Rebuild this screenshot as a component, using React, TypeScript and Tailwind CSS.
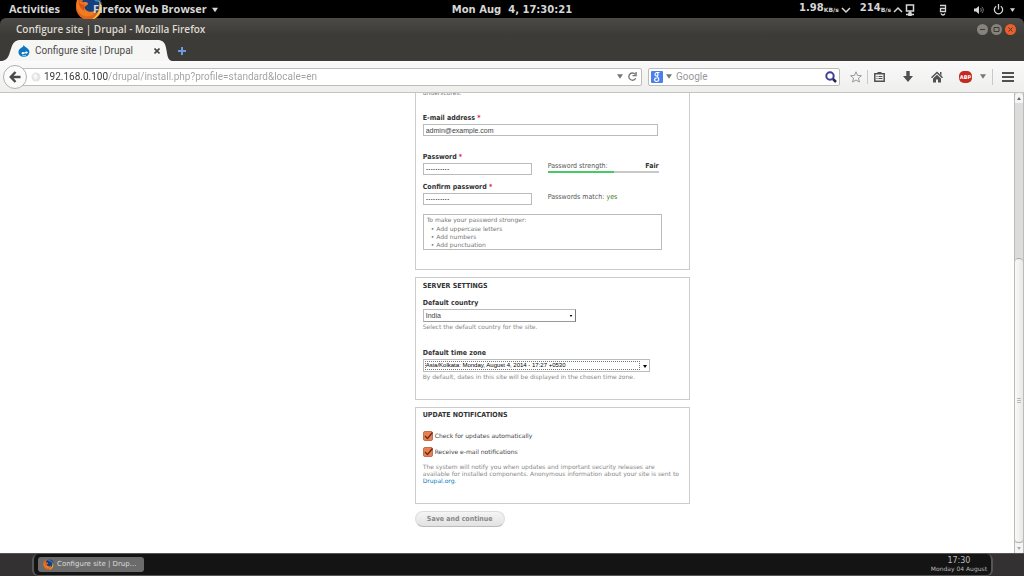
import React, { useState } from "react";

const FirefoxIcon: React.FC<{ className?: string }> = ({ className }) => (
  <svg viewBox="0 0 30 30" className={className} aria-hidden="true">
    <circle cx="15" cy="15" r="14" fill="#e2631c" />
    <circle cx="18" cy="12" r="10.5" fill="#173f7d" />
    <path d="M12 4C17 1 25 4 27 10L22 9C19 5 15 5 12 4Z" fill="#2f7fc4" />
    <path d="M4 4C3 9 5 10 9 10C12 9 14 10 14 12L10 15C11 20 18 22 23 18C21 26 9 28 4 20C0 14 1 8 4 4Z" fill="#f07c1f" />
    <path d="M26 8C31 15 27 27 17 29C23 25 27 20 26 8Z" fill="#f7c331" />
    <path d="M4 6C4 11 7 13 11 12C9 14 9 17 11 19C6 18 3 12 4 6Z" fill="#d9521b" />
  </svg>
);

const DrupalIcon = () => (
  <svg viewBox="0 0 12 12" className="size-3 shrink-0" aria-hidden="true">
    <path d="M5.6 0C6.4 1.6 8 2 9.3 3.2C10.9 4.5 11.6 6 11.4 7.6C11.1 10.1 8.8 12 6 12C3 12 .6 10 .5 7.3C.4 5.6 1.2 4.3 2.7 3.2C4 2.3 5.4 1.8 5.6 0Z" fill="#0a77bf" />
    <path d="M3.5 8.4C4 6.8 5.2 6.8 6.4 7.6C7.6 6.6 9 6.2 9.8 7.2C9.6 8.8 8.4 9 7 8.2C5.8 9.2 4.2 9.8 3.5 8.4Z" fill="#fff" />
    <path d="M4.5 10.4C5.5 11 6.8 11 7.8 10.3" stroke="#fff" strokeWidth=".8" fill="none" />
  </svg>
);

const Caret: React.FC<{ className?: string }> = ({ className }) => (
  <svg viewBox="0 0 8 6" className={className} aria-hidden="true">
    <path d="M0 0H8L4 6Z" fill="currentColor" />
  </svg>
);

const TopBar = () => (
  <header className="grid h-[18px] shrink-0 grid-cols-3 items-center bg-black text-[11px] font-bold text-[#d6d6d6]">
    <div className="flex h-full items-center overflow-hidden pl-[9px] font-['Open_Sans',sans-serif]">
      <button className="font-bold">Activities</button>
      <button className="relative flex items-center pl-[33px] font-bold whitespace-nowrap">
        <FirefoxIcon className="absolute -top-2 left-[15px] size-[28px]" />
        <span className="relative">Firefox Web Browser</span>
        <Caret className="ml-[5px] h-[6px] w-[6px]" />
      </button>
    </div>
    <div className="text-center font-['DejaVu_Sans',sans-serif] text-[10px] whitespace-pre">Mon Aug  4, 17:30:21</div>
    <div className="flex items-center justify-end pr-[9px]">
      <span className="pb-1 font-['DejaVu_Sans',sans-serif] text-[10px]">1.98</span>
      <span className="font-['DejaVu_Sans',sans-serif] text-[6px]">KB/s</span>
      <svg viewBox="0 0 10 8" className="ml-[2px] h-2 w-[10px]" fill="none" stroke="currentColor" strokeWidth="1.5"><path d="M1 2L5 6L9 2" /></svg>
      <span className="ml-[9px] pb-1 font-['DejaVu_Sans',sans-serif] text-[10px]">214</span>
      <span className="font-['DejaVu_Sans',sans-serif] text-[6px]">B/s</span>
      <svg viewBox="0 0 10 8" className="ml-[2px] h-2 w-[10px]" fill="none" stroke="currentColor" strokeWidth="1.5"><path d="M1 6L5 2L9 6" /></svg>
      <svg viewBox="0 0 10 12" className="ml-[2px] h-3 w-[10px]" fill="none" stroke="currentColor" strokeWidth="1.5"><path d="M1.5 1H8.5V7H1.5ZM5 7V9M1 10.5H9M4 9H6V11.5H4Z" /></svg>
      <svg viewBox="0 0 8 12" className="ml-[24px] h-3 w-2" fill="none" stroke="currentColor" strokeWidth="1.3"><path d="M1 1.5H6.5V7.5H1.5V4.5H6.5M2 9.5C3 11.5 5 11.5 6 9.5" /></svg>
      <svg viewBox="0 0 12 10" className="ml-[26px] h-[10px] w-3" fill="currentColor"><path d="M1 3.5H3L6 1V9L3 6.5H1Z" /><path d="M7.5 3C8.5 4 8.5 6 7.5 7M9 2C10.7 4 10.7 6 9 8" fill="none" stroke="#777" /></svg>
      <svg viewBox="0 0 12 12" className="ml-[8px] h-[11px] w-[11px]" fill="none" stroke="currentColor" strokeWidth="1.4"><path d="M3.5 2.5A4.5 4.5 0 1 0 8.5 2.5M6 0V6" /></svg>
      <Caret className="ml-[6px] h-[6px] w-[5px]" />
    </div>
  </header>
);

const WindowButton: React.FC<{ label: string; d: string; close?: boolean }> = ({ label, d, close }) => (
  <button aria-label={label} className={`size-[11px] rounded-full ${close ? "bg-[#ec5f2a]" : "bg-[#85837c]"}`}>
    <svg viewBox="0 0 11 11" className="size-[11px]" fill="none" stroke="#3c3b37"><path d={d} /></svg>
  </button>
);

const TitleBar = () => (
  <div className="flex h-[43px] shrink-0 flex-col justify-between rounded-t-md bg-linear-to-b from-[#4b4a46] to-[#3c3b37] to-40%">
    <div className="flex h-[22px] items-center justify-between pr-2 pl-4">
      <h1 className="font-['Open_Sans',sans-serif] text-[10px] font-semibold text-[#dfdbd2]">Configure site | Drupal - Mozilla Firefox</h1>
      <div className="flex gap-[3px]">
        <WindowButton label="Minimize" d="M3 5.5H8" />
        <WindowButton label="Restore" d="M3 3.5H8V7.5H3Z" />
        <WindowButton label="Close" d="M3.5 3.5L7.5 7.5M7.5 3.5L3.5 7.5" close />
      </div>
    </div>
    <div className="flex h-[21px] items-center">
      <div className="relative flex h-full w-[172px] items-center pr-[12px] pl-[18px]">
        <svg viewBox="0 0 172 21" preserveAspectRatio="none" className="absolute inset-0 size-full" fill="#f6f6f5" aria-hidden="true">
          <path d="M2 21C13 20 8 1 19 0H159C170 1 164 20 172 21Z" />
        </svg>
        <div className="relative flex flex-1 items-center font-['Roboto',sans-serif] text-[10px] text-[#4c4c4c]">
          <DrupalIcon />
          <span className="ml-[5px]">Configure site | Drupal</span>
          <button aria-label="Close tab" className="ml-auto">
            <svg viewBox="0 0 6 6" className="size-[6px]" stroke="#444" strokeWidth="1.6"><path d="M.5 .5L5.5 5.5M5.5 .5L.5 5.5" /></svg>
          </button>
        </div>
      </div>
      <button aria-label="New tab" className="ml-[6px]">
        <svg viewBox="0 0 8 8" className="size-2" stroke="#6b9bdc" strokeWidth="2"><path d="M4 0V8M0 4H8" /></svg>
      </button>
    </div>
  </div>
);

const Toolbar = () => (
  <div className="flex h-[32px] shrink-0 items-center border-b border-[#c4c4c2] bg-linear-to-b from-[#fafafa] to-[#eeeeed] pr-[10px] pl-[3px] font-['Roboto',sans-serif] text-[10px] text-[#505050]">
    <button aria-label="Back" className="z-10 flex size-6 shrink-0 items-center justify-center rounded-full border border-[#b0b0ae] bg-[#fbfbfb]">
      <svg viewBox="0 0 12 12" className="size-3" fill="none" stroke="#4a4a4a" strokeWidth="2.5"><path d="M6.5 1L1.8 6L6.5 11M2 6H11.5" /></svg>
    </button>
    <div className="-ml-2 flex h-[18px] flex-1 items-center rounded-xs border border-[#bcbcba] bg-white pr-[4px] pl-[11px]">
      <svg viewBox="0 0 10 10" className="size-[10px] shrink-0"><circle cx="5" cy="5" r="4.5" fill="#e4e4e4" /><path d="M2 3L5 2L7 5L4 8ZM7 2L9 4" fill="#f7f7f7" /></svg>
      <input
        aria-label="Address"
        defaultValue="192.168.0.100/drupal/install.php?profile=standard&locale=en"
        className="ml-[3px] min-w-0 flex-1 bg-linear-to-r from-[#333] from-[64px] to-[#a0a0a0] to-[64px] bg-clip-text text-[10px] text-transparent outline-none"
      />
      <Caret className="h-[5px] w-[6px] text-[#777]" />
      <button aria-label="Reload" className="ml-[5px]">
        <svg viewBox="0 0 10 10" className="size-[9px]" fill="none" stroke="#777" strokeWidth="1.5"><path d="M8 2.5A4 4 0 1 0 8.5 7M9 0V4H5" /></svg>
      </button>
    </div>
    <div className="ml-[6px] flex h-[18px] w-[192px] items-center rounded-xs border border-[#bcbcba] bg-white px-[2px]">
      <svg viewBox="0 0 12 12" className="size-3 shrink-0"><rect width="12" height="12" rx="1" fill="#4a80ee" /><path d="M8.5 1.5H5.5C3.5 2 3.5 5 5.5 5S7.5 2.5 6 1.7M6 5L7.5 7M5.8 6.8C3 6.8 2.8 10.5 5.5 10.5S8.5 7.5 6.5 6.5" stroke="#fff" strokeWidth="1.2" fill="none" /></svg>
      <Caret className="ml-[3px] h-[5px] w-[6px] shrink-0 text-[#777]" />
      <input aria-label="Search" placeholder="Google" className="ml-[4px] min-w-0 flex-1 outline-none placeholder:text-[#999]" />
      <button aria-label="Search">
        <svg viewBox="0 0 12 12" className="size-3" fill="none" stroke="#403f94"><circle cx="5" cy="5" r="3.7" strokeWidth="2" /><path d="M8 8L11 11" strokeWidth="2.5" stroke="#26264f" /></svg>
      </button>
    </div>
    <button aria-label="Bookmark" className="ml-[10px]">
      <svg viewBox="0 0 12 12" className="size-3" fill="none" stroke="#999"><path d="M6 .8L7.5 4.4L11.4 4.7L8.5 7.2L9.4 11L6 9L2.6 11L3.5 7.2L.6 4.7L4.5 4.4Z" /></svg>
    </button>
    <span className="ml-[5px] h-[14px] w-px bg-[#c8c8c8]" />
    <button aria-label="Bookmarks menu" className="ml-[6px]">
      <svg viewBox="0 0 11 12" className="h-3 w-[11px]" stroke="#505050" fill="none"><path d="M.8 2.8H10.2V10.2H.8Z" strokeWidth="1.5" /><path d="M3.500 1H7.500V3H3.500Z" fill="#505050" stroke="none" /><path d="M2.5 5.5H3.5M4.5 5.5H8.5M2.5 7.5H3.5M4.5 7.5H8.5" /></svg>
    </button>
    <button aria-label="Downloads" className="ml-[18px]">
      <svg viewBox="0 0 10 11" className="h-[11px] w-[10px]" fill="#505050"><path d="M3.3 0H6.7V5H10L5 11L0 5H3.3Z" /></svg>
    </button>
    <button aria-label="Home" className="ml-[18px]">
      <svg viewBox="0 0 12 12" className="size-3" fill="#505050"><path d="M6 .5L12 6.3L11 7.3L6 2.6L1 7.3L0 6.3ZM9 1H10.5V4.5L9 3ZM2 7.4L6 3.700L10 7.4V11.5H7V8.5H5V11.5H2Z" /></svg>
    </button>
    <button aria-label="Adblock Plus" className="ml-[16px] flex h-3 w-[13px] items-center justify-center rounded-[5px] bg-[#c32a22] font-['DejaVu_Sans',sans-serif] text-[5px] leading-3 font-bold text-white">ABP</button>
    <button aria-label="Adblock menu" className="ml-[8px]"><Caret className="h-[5px] w-[6px] text-[#777]" /></button>
    <span className="ml-[6px] h-[16px] w-px bg-[#c8c8c8]" />
    <button aria-label="Menu" className="ml-[9px]">
      <svg viewBox="0 0 12 10" className="h-[10px] w-3" stroke="#505050" strokeWidth="2"><path d="M0 1H12M0 5H12M0 9H12" /></svg>
    </button>
  </div>
);

const Label: React.FC<{ htmlFor: string; required?: boolean; children: React.ReactNode }> = ({ htmlFor, required, children }) => (
  <label htmlFor={htmlFor} className="block h-[10px] font-['DejaVu_Sans_Condensed','DejaVu_Sans',sans-serif] text-[7px] leading-[10px] font-bold whitespace-nowrap text-[#333]">
    {children}
    {required && <span className="text-[#e0203c]"> *</span>}
  </label>
);

const Heading: React.FC<{ children: React.ReactNode }> = ({ children }) => (
  <h2 className="font-['DejaVu_Sans_Condensed','DejaVu_Sans',sans-serif] text-[7px] leading-[10px] font-bold text-[#333]">{children}</h2>
);

const field = "mt-px block h-3 border border-[#bbb] bg-white px-[2px] text-[#444] outline-none";

const Check: React.FC<{ id: string; label: string }> = ({ id, label }) => {
  const [checked, setChecked] = useState(true);
  return (
    <div className="flex h-[10px] items-center">
      <span className="relative size-[10px]">
        <input id={id} type="checkbox" checked={checked} onChange={(e) => setChecked(e.target.checked)} className="block size-[10px] appearance-none rounded-xs border border-[#c0714f] bg-[#ee7d50]" />
        {checked && (
          <svg viewBox="0 0 10 10" className="pointer-events-none absolute inset-0 size-[10px]" fill="none" stroke="#5a3222" strokeWidth="1.3"><path d="M2 5L4.5 7.5L9.5 1.5" /></svg>
        )}
      </span>
      <label htmlFor={id} className="ml-[2px] text-[#444]">{label}</label>
    </div>
  );
};

const InstallForm = () => (
  <form className="-mt-10 w-[275px] font-['DejaVu_Sans',sans-serif] text-[6px] leading-[10px] text-[#555]" onSubmit={(e) => e.preventDefault()}>
    <fieldset className="border border-[#ccc] px-[7px] pb-[19px]">
      <p className="mt-[34px] h-[10px] text-[#777]">underscores.</p>
      <div className="mt-[15px]">
        <Label htmlFor="mail" required>E-mail address</Label>
        <input id="mail" type="email" defaultValue="admin@example.com" className={`${field} w-[235px] font-['Liberation_Sans',sans-serif] text-[7px]`} />
      </div>
      <div className="mt-4 flex">
        <div className="w-[125px]">
          <Label htmlFor="pass1" required>Password</Label>
          <input id="pass1" type="password" defaultValue="drupaladmi" className={`${field} w-[109px] text-[4px]`} />
        </div>
        <div className="w-[111px] pt-[9px] font-['DejaVu_Sans_Condensed','DejaVu_Sans',sans-serif] text-[7px] leading-[10px]">
          <div className="flex justify-between"><span>Password strength:</span><strong className="text-[#333]">Fair</strong></div>
          <div className="h-[2px] bg-[#c8c8c8]"><div className="h-full w-3/5 bg-[#47c965]" /></div>
        </div>
      </div>
      <div className="mt-[7px] flex">
        <div className="w-[125px]">
          <Label htmlFor="pass2" required>Confirm password</Label>
          <input id="pass2" type="password" defaultValue="drupaladmi" className={`${field} w-[109px] text-[4px]`} />
        </div>
        <div className="pt-[10px] font-['DejaVu_Sans_Condensed','DejaVu_Sans',sans-serif] text-[7px] leading-[10px]">Passwords match: <span className="text-[#4e7a20]">yes</span></div>
      </div>
      <div className="mt-[9px] w-[239px] border border-[#bbb] px-[3px] text-[#777]">
        <p>To make your password stronger:</p>
        <ul className="pl-1 leading-[8px]">
          <li className="before:mr-[2px] before:content-['•']">Add uppercase letters</li>
          <li className="before:mr-[2px] before:content-['•']">Add numbers</li>
          <li className="before:mr-[2px] before:content-['•']">Add punctuation</li>
        </ul>
      </div>
    </fieldset>

    <fieldset className="mt-[7px] border border-[#ccc] px-[7px] pt-[3px] pb-[17px]">
      <Heading>SERVER SETTINGS</Heading>
      <div className="mt-[7px]">
        <Label htmlFor="country">Default country</Label>
        <div className="relative w-[153px]">
          <select id="country" className={`${field} h-[13px] w-full appearance-none border-r-[#777] border-b-[#999] font-['Liberation_Sans',sans-serif] text-[7px] leading-[11px]`}>
            <option>India</option>
          </select>
          <Caret className="pointer-events-none absolute top-[6px] right-[3px] h-[2px] w-1 text-black" />
        </div>
        <p className="text-[#888]">Select the default country for the site.</p>
      </div>
      <div className="mt-4">
        <Label htmlFor="zone">Default time zone</Label>
        <div className="relative w-[227px]">
          <select id="zone" className={`${field} h-[13px] w-full appearance-none border-[#8b9fb5] font-['Liberation_Sans',sans-serif] text-[6px] leading-[11px] text-black`}>
            <option>Asia/Kolkata: Monday, August 4, 2014 - 17:27 +0530</option>
          </select>
          <span className="pointer-events-none absolute inset-y-[2px] right-[10px] left-[2px] border border-dotted border-[#777]" />
          <Caret className="pointer-events-none absolute top-[6px] right-[3px] h-[3px] w-1 text-black" />
        </div>
        <p className="text-[#888]">By default, dates in this site will be displayed in the chosen time zone.</p>
      </div>
    </fieldset>

    <fieldset className="mt-[7px] border border-[#ccc] px-[7px] pt-[2px] pb-[19px]">
      <Heading>UPDATE NOTIFICATIONS</Heading>
      <div className="mt-[11px] flex flex-col gap-[6px]">
        <Check id="updates" label="Check for updates automatically" />
        <Check id="emails" label="Receive e-mail notifications" />
      </div>
      <p className="mt-[6px] leading-[7px] text-[#888]">
        The system will notify you when updates and important security releases are available for installed components. Anonymous information about your site is sent to <a href="#drupal" className="text-[#0a7ec2]">Drupal.org</a>.
      </p>
    </fieldset>

    <button type="submit" className="mt-[7px] h-4 w-[90px] rounded-full border border-[#ddd] border-b-[#bbb] bg-linear-to-b from-[#f5f5f5] to-[#e2e2e2] font-['DejaVu_Sans_Condensed','DejaVu_Sans',sans-serif] text-[7px] font-bold text-[#888]">
      Save and continue
    </button>
  </form>
);

const Scrollbar = () => (
  <div className="flex w-[10px] shrink-0 flex-col border-x border-[#bbb] bg-[#dcdcda]" aria-hidden="true">
    <div className="flex h-[10px] items-center justify-center rounded-t-md bg-[#f5f5f5]"><Caret className="h-[3px] w-1 rotate-180 text-[#666]" /></div>
    <div className="flex-1" />
    <div className="flex h-[62%] flex-col items-center justify-center gap-px rounded-md border-y border-[#aaa] bg-linear-to-r from-[#fafafa] to-[#e8e8e6]">
      <span className="h-px w-1 bg-[#bbb]" />
      <span className="h-px w-1 bg-[#bbb]" />
      <span className="h-px w-1 bg-[#bbb]" />
    </div>
    <div className="flex h-[10px] items-center justify-center bg-[#f5f5f5]"><Caret className="h-[3px] w-1 text-[#aaa]" /></div>
  </div>
);

const Taskbar = () => (
  <footer className="flex h-[23px] shrink-0 border-t border-[#555] bg-[#333132] pr-[31px] pl-8 font-['DejaVu_Sans',sans-serif]">
    <div className="flex flex-1 items-center justify-between rounded-md border-x-2 border-b border-[#565656] bg-[#141414] px-[4px]">
      <button className="flex h-[15px] w-[106px] items-center rounded-[3px] bg-[#6b6b6b] pl-[5px] text-[7px] text-[#ddd]">
        <FirefoxIcon className="mr-[3px] size-[11px]" />
        Configure site | Drup...
      </button>
      <div className="text-center text-[6px] leading-[8px] text-[#bbb]">
        <div className="text-[8px]">17:30</div>
        <div>Monday 04 August</div>
      </div>
    </div>
  </footer>
);

const App: React.FC = () => (
  <div className="flex h-screen flex-col overflow-hidden bg-black">
    <TopBar />
    <TitleBar />
    <Toolbar />
    <main className="flex min-h-0 flex-1 bg-white">
      <div className="flex flex-1 overflow-hidden">
        <div className="w-[40.9%] shrink-0" />
        <InstallForm />
      </div>
      <Scrollbar />
    </main>
    <Taskbar />
  </div>
);

export default App;
